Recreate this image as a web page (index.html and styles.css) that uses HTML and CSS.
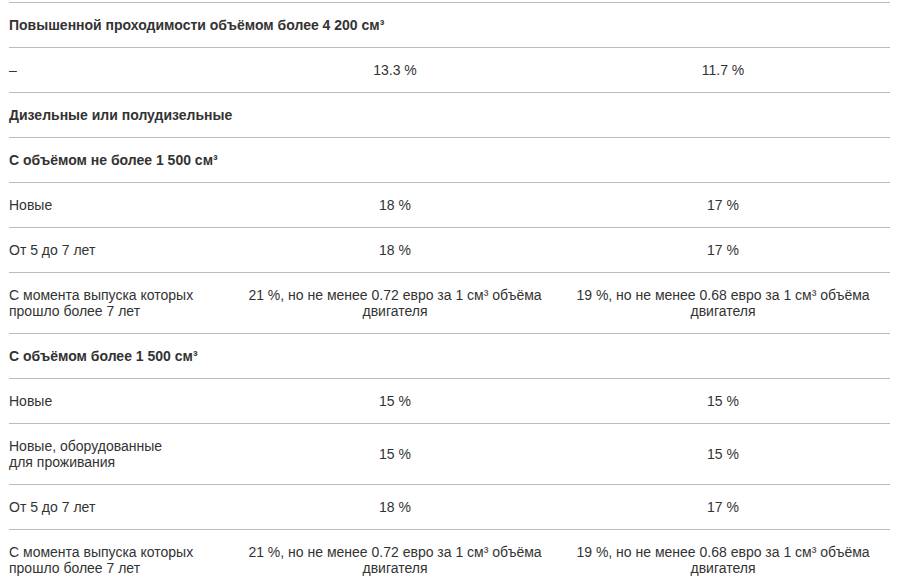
FILE: index.html
```html
<!DOCTYPE html>
<html lang="ru">
<head>
<meta charset="utf-8">
<link rel="stylesheet" href="styles.css">
</head>
<body>
<div class="wrap">
<table class="rates">
  <colgroup>
    <col class="c1"><col class="c2"><col class="c3">
  </colgroup>
  <tbody>
    <tr class="head"><td colspan="3">Повышенной проходимости объёмом более 4 200 см³</td></tr>
    <tr><td>–</td><td>13.3 %</td><td>11.7 %</td></tr>
    <tr class="head"><td colspan="3">Дизельные или полудизельные</td></tr>
    <tr class="head"><td colspan="3">С объёмом не более 1 500 см³</td></tr>
    <tr><td>Новые</td><td>18 %</td><td>17 %</td></tr>
    <tr><td>От 5 до 7 лет</td><td>18 %</td><td>17 %</td></tr>
    <tr><td>С момента выпуска которых прошло более 7 лет</td><td>21 %, но не менее 0.72 евро за 1 см³ объёма двигателя</td><td>19 %, но не менее 0.68 евро за 1 см³ объёма двигателя</td></tr>
    <tr class="head"><td colspan="3">С объёмом более 1 500 см³</td></tr>
    <tr><td>Новые</td><td>15 %</td><td>15 %</td></tr>
    <tr><td>Новые, оборудованные<br>для проживания</td><td>15 %</td><td>15 %</td></tr>
    <tr><td>От 5 до 7 лет</td><td>18 %</td><td>17 %</td></tr>
    <tr><td>С момента выпуска которых прошло более 7 лет</td><td>21 %, но не менее 0.72 евро за 1 см³ объёма двигателя</td><td>19 %, но не менее 0.68 евро за 1 см³ объёма двигателя</td></tr>
  </tbody>
</table>
</div>
</body>
</html>
```
FILE: styles.css
```css
html, body {
  margin: 0;
  padding: 0;
  background: #fff;
}
.wrap {
  padding: 2px 7px 0 9px;
}
.rates {
  width: 881px;
  border-collapse: collapse;
  table-layout: fixed;
  font-family: "Liberation Sans", Arial, sans-serif;
  font-size: 14px;
  line-height: 16px;
  color: #333;
  border-top: 1px solid #bbb;
}
.c1 { width: 225px; }
.c2 { width: 322px; }
.c3 { width: 334px; }
.rates td {
  padding: 14px 10px;
  border-bottom: 1px solid #bbb;
  text-align: center;
  vertical-align: middle;
}
.rates td:first-child {
  padding-left: 0;
  text-align: left;
}
.rates .head td {
  font-weight: bold;
  text-align: left;
}
```
